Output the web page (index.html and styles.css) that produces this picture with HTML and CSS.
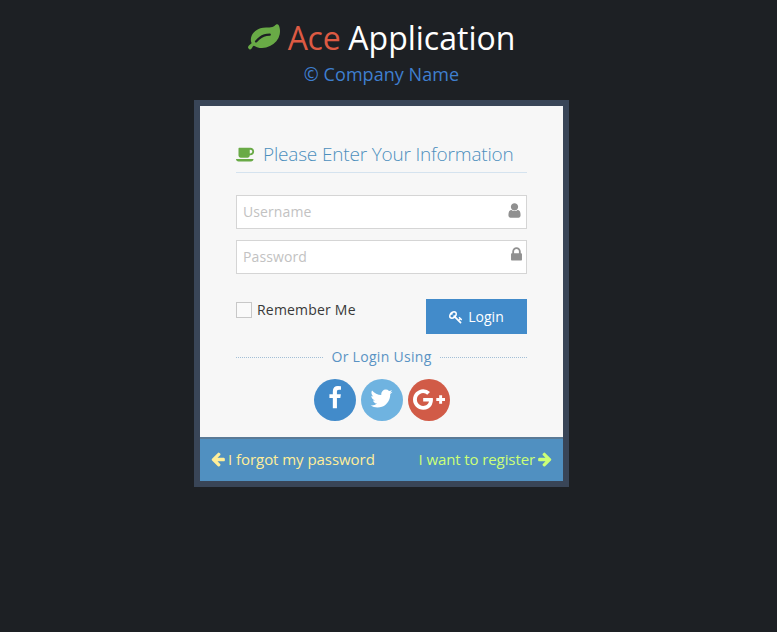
FILE: index.html
```html
<!DOCTYPE html>
<html lang="en">
<head>
  <meta charset="UTF-8">
  <title>Login - Ace Application</title>
  <link rel="stylesheet" href="styles.css">
</head>
<body>
  <div class="login-container">
    <!-- Brand -->
    <div class="brand">
      <h1>
        <svg class="icon leaf" viewBox="0 0 1792 1792"><path d="M1280 704q0-26-19-45t-45-19q-172 0-318 49.500t-259.500 134-235.500 219.500q-19 21-19 45 0 26 19 45t45 19q24 0 45-19 27-24 74-71t67-66q137-124 268.500-176t313.500-52q26 0 45-19t19-45zm512-198q0 95-20 193-46 224-184.500 383t-357.500 268q-214 108-438 108-148 0-286-47-15-5-88-42t-96-37q-16 0-39.500 32t-45 70-52.500 70-60 32q-30 0-51-11t-31-24-27-42q-2-4-6-11t-5.500-10-3-9.500-1.500-13.500q0-35 31-73.500t68-65.500 68-56 31-48q0-4-14-38t-16-44q-9-51-9-104 0-115 43.500-220t119-184.500 170.500-139 204-95.500q55-18 145-25.500t179.500-9 178.500-6 163.500-24 113.500-56.500l29.500-29.500 29.500-28 27-20 36.500-16 43.500-4.500q39 0 70.500 46t47.500 112 24 124 8 96z"/></svg>
        <span class="red">Ace</span> <span class="white">Application</span>
      </h1>
      <h4>&copy; Company Name</h4>
    </div>

    <!-- Login box -->
    <div class="login-box">
      <div class="box-main">
        <h4 class="box-title">
          <svg class="icon coffee" viewBox="0 0 2048 1792"><path d="M1664 640q0-80-56-136t-136-56h-64v384h64q80 0 136-56t56-136zm-1664 768h1792q0 106-75 181t-181 75h-1280q-106 0-181-75t-75-181zm1856-768q0 159-112.500 271.500t-271.500 112.500h-64v32q0 92-66 158t-158 66h-704q-92 0-158-66t-66-158v-736q0-26 19-45t45-19h1152q159 0 271.500 112.500t112.500 271.500z"/></svg>
          Please Enter Your Information
        </h4>

        <form>
          <label class="field">
            <input type="text" placeholder="Username">
            <svg class="icon field-icon user-icon" viewBox="0 0 1792 1792"><path d="M1536 1399q0 109-62.500 187t-150.500 78h-854q-88 0-150.500-78t-62.500-187q0-85 8.500-160.500t31.500-152 58.500-131 94-89 134.500-34.500q131 128 313 128t313-128q76 0 134.500 34.500t94 89 58.500 131 31.500 152 8.500 160.500zm-256-887q0 159-112.500 271.500t-271.500 112.500-271.500-112.500-112.500-271.500 112.500-271.500 271.500-112.500 271.500 112.500 112.500 271.500z"/></svg>
          </label>
          <label class="field">
            <input type="password" placeholder="Password">
            <svg class="icon field-icon lock-icon" viewBox="0 0 1792 1792"><path d="M640 768h512v-192q0-106-75-181t-181-75-181 75-75 181v192zm832 96v576q0 40-28 68t-68 28h-960q-40 0-68-28t-28-68v-576q0-40 28-68t68-28h32v-192q0-184 132-316t316-132 316 132 132 316v192h32q40 0 68 28t28 68z"/></svg>
          </label>

          <div class="form-actions">
            <label class="remember">
              <span class="check"></span>
              Remember Me
            </label>
            <button type="button" class="btn-login">
              <svg class="icon key" viewBox="0 0 1792 1792"><path d="M832 512q0-80-56-136t-136-56-136 56-56 136q0 42 19 83-41-19-83-19-80 0-136 56t-56 136 56 136 136 56 136-56 56-136q0-42-19-83 41 19 83 19 80 0 136-56t56-136zm851 704q0 17-49 66t-66 49q-9 0-28.500-16t-36.500-33-38.500-40-24.500-26l-96 96 220 220q28 28 28 68 0 42-39 81t-81 39q-40 0-68-28l-671-671q-176 131-365 131-163 0-265.500-102.500t-102.500-265.500q0-160 95-313t248-248 313-95q163 0 265.500 102.500t102.500 265.500q0 189-131 365l355 355 96-96q-3-3-26-24.500t-40-38.500-33-36.500-16-28.500q0-17 49-66t66-49q13 0 23 10 6 6 46 44.500t82 79.500 86.500 86 73 78 28.500 41z"/></svg>
              Login
            </button>
          </div>
        </form>

        <div class="divider"><span>Or Login Using</span></div>

        <div class="social">
          <a class="circle fb" href="#"><svg class="icon" viewBox="0 0 1792 1792"><path d="M1343 12v264h-157q-86 0-116 36t-30 108v189h293l-39 296h-254v759h-306v-759h-255v-296h255v-218q0-186 104-288.500t277-102.500q147 0 228 12z"/></svg></a>
          <a class="circle tw" href="#"><svg class="icon" viewBox="0 0 1792 1792"><path d="M1684 408q-67 98-162 167 1 14 1 42 0 130-38 259.500t-115.500 248.500-184.500 210.500-258 146-323 54.500q-271 0-496-145 35 4 78 4 225 0 401-138-105-2-188-64.500t-114-159.500q33 5 61 5 43 0 85-11-112-23-185.500-111.500t-73.500-205.500v-4q68 38 146 41-66-44-105-115t-39-154q0-88 44-163 121 149 294.500 238.500t371.500 99.500q-8-38-8-74 0-134 94.500-228.500t228.500-94.500q140 0 236 102 109-21 205-78-37 115-142 178 92-10 184-50z"/></svg></a>
          <a class="circle gp" href="#"><svg class="icon" viewBox="0 0 2304 1792"><path d="M1437 913q0 208-87 370.500t-248 254-369 91.500q-149 0-285-58t-234-156-156-234-58-285 58-285 156-234 234-156 285-58q286 0 491 192l-199 191q-117-113-292-113-123 0-227.500 62t-165.500 168.500-61 232.500 61 232.500 165.500 168.500 227.500 62q83 0 152.500-23t114.500-57.500 78.500-78.500 49-83 21.500-74h-416v-252h692q12 63 12 122zm867-122v210h-209v209h-210v-209h-209v-210h209v-209h210v209h209z"/></svg></a>
        </div>
      </div>

      <div class="box-footer">
        <a class="forgot" href="#">
          <svg class="icon arrow" viewBox="0 0 1792 1792"><path d="M1664 896v128q0 53-32.500 90.500t-84.500 37.500h-704l293 294q38 36 38 90t-38 90l-75 76q-37 37-90 37-52 0-91-37l-651-652q-37-37-37-90 0-52 37-91l651-650q38-38 91-38 52 0 90 38l75 74q38 38 38 91t-38 91l-293 293h704q52 0 84.500 37.500t32.500 90.500z"/></svg>
          I forgot my password
        </a>
        <a class="register" href="#">
          I want to register
          <svg class="icon arrow" viewBox="0 0 1792 1792"><path d="M1600 960q0 54-37 91l-651 651q-39 37-91 37-51 0-90-37l-75-75q-38-38-38-91t38-91l293-293h-704q-52 0-84.500-37.500t-32.500-90.500v-128q0-53 32.500-90.500t84.500-37.500h704l-293-294q-38-36-38-90t38-90l75-75q38-38 90-38 53 0 91 38l651 651q37 35 37 90z"/></svg>
        </a>
      </div>
    </div>
  </div>
</body>
</html>
```

FILE: styles.css
```css
/* Reset & Base */
* { box-sizing: border-box; margin: 0; padding: 0; }
html, body { height: 100%; }
body {
  font-family: "Open Sans", sans-serif;
  font-size: 14px;
  background: #1d2024;
  color: #393939;
  overflow: hidden;
}
a { text-decoration: none; color: inherit; }
.icon { fill: currentColor; display: inline-block; }

.login-container { width: 375px; margin-left: 194px; }

/* Brand */
.brand { text-align: center; height: 100px; padding-top: 17px; }
.brand h1 {
  font-size: 32px;
  font-weight: 400;
  line-height: 42px;
  display: flex;
  justify-content: center;
  align-items: center;
  gap: 8px;
}
.leaf { width: 32px; height: 32px; color: #69aa46; }
.red { color: #dd5a43; letter-spacing: -.3px; }
.white { color: #fff; }
.brand h4 {
  font-size: 18px;
  font-weight: 400;
  line-height: 26px;
  margin-top: 2px;
  letter-spacing: .05px;
  color: #3f7fcf;
}

/* Box */
.login-box { background: #394557; padding: 6px; }
.box-main { background: #f7f7f7; padding: 33px 36px 16px; }
.box-title {
  display: flex;
  align-items: center;
  gap: 7px;
  font-size: 19px;
  font-weight: 300;
  line-height: 26px;
  height: 34px;
  padding-bottom: 3px;
  letter-spacing: -.18px;
  color: #4c8fbd;
  border-bottom: 1px solid #d5e3ef;
  margin-bottom: 22px;
}
.coffee { width: 20px; height: 18px; color: #69aa46; }

/* Fields */
.field { display: block; position: relative; margin-bottom: 11px; }
.field input {
  display: block;
  width: 100%;
  height: 34px;
  padding: 4px 30px 6px 6px;
  border: 1px solid #d5d5d5;
  background: #fff;
  font-family: inherit;
  font-size: 14px;
  letter-spacing: .1px;
  color: #858585;
  outline: none;
}
.field input::placeholder { color: #c2c2c2; opacity: 1; }
.field-icon {
  position: absolute;
  width: 17px;
  height: 17px;
  color: #909090;
}
.user-icon { right: 4px; top: 7px; }
.lock-icon { right: 2px; top: 6px; }

/* Remember + login */
.form-actions {
  display: flex;
  justify-content: space-between;
  align-items: flex-start;
  margin-top: 25px;
}
.remember {
  display: flex;
  align-items: center;
  gap: 5px;
  line-height: 16px;
  margin-top: 3px;
  letter-spacing: .2px;
}
.check {
  width: 16px;
  height: 16px;
  border: 1px solid #c8c8c8;
  background: #fafafa;
}
.btn-login {
  display: flex;
  align-items: center;
  justify-content: center;
  gap: 5px;
  width: 101px;
  height: 35px;
  border: none;
  background: #428bca;
  color: #fff;
  font-family: inherit;
  font-size: 14px;
}
.key { width: 14px; height: 14px; }

/* Divider */
.divider {
  display: flex;
  align-items: center;
  gap: 8px;
  margin-top: 12px;
  height: 20px;
  letter-spacing: .3px;
  color: #5a93c4;
}
.divider::before, .divider::after {
  content: "";
  flex: 1;
  border-top: 1px dotted #a3bfd6;
  margin-top: 2px;
}

/* Social */
.social { display: flex; justify-content: center; gap: 5px; margin-top: 13px; }
.circle {
  display: flex;
  align-items: center;
  justify-content: center;
  width: 42px;
  height: 42px;
  border-radius: 50%;
  color: #fff;
}
.fb { background: #428bca; }
.fb .icon { width: 24px; height: 24px; margin-top: -5px; }
.tw { background: #6fb3e0; }
.tw .icon { width: 25px; height: 25px; margin-top: -3px; }
.gp { background: #d15b47; }
.gp .icon { width: 32px; height: 25px; margin-top: -2px; }

/* Footer */
.box-footer {
  display: flex;
  justify-content: space-between;
  align-items: center;
  height: 44px;
  padding: 0 10px 2px;
  background: #5090c1;
  border-top: 2px solid #5a7a96;
  font-size: 15px;
}
.forgot, .register { display: flex; align-items: center; gap: 2px; }
.forgot { color: #fe9; letter-spacing: -.05px; }
.register { color: #cf7; letter-spacing: -.1px; }
.arrow { width: 16px; height: 16px; }
```
